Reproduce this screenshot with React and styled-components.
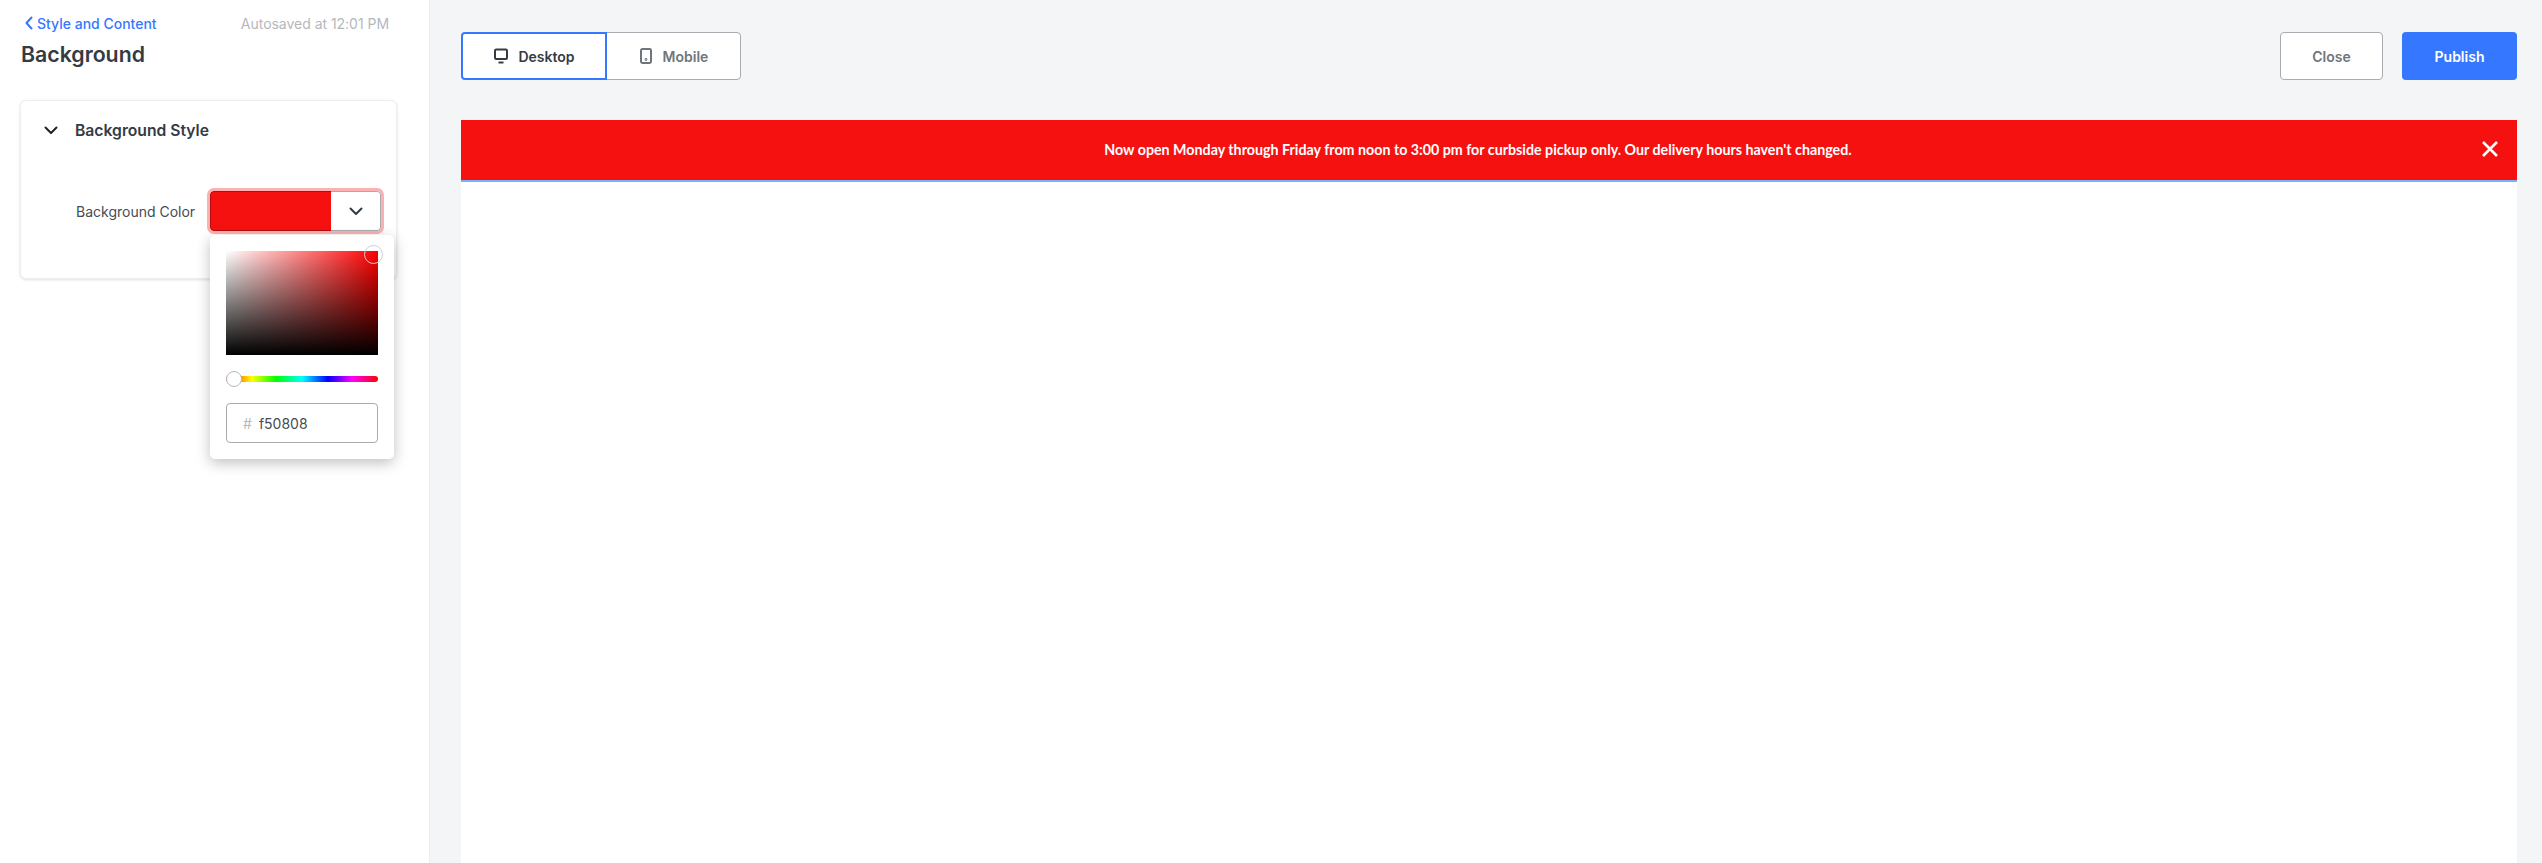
import React from "react";
import styled, { createGlobalStyle } from "styled-components";

const Global = createGlobalStyle`
  html, body { margin: 0; padding: 0; height: 100%; }
  body { font-family: Inter, "Liberation Sans", sans-serif; background: #f4f5f7; color: #343b43; }
  * { box-sizing: border-box; }
`;

const Page = styled.div`
  display: flex;
  width: 100%;
  height: 863px;
  overflow: hidden;
`;
const Sidebar = styled.aside`
  width: 430px;
  flex: none;
  background: #fff;
  border-right: 1px solid #eceef0;
  padding: 0 20px;
`;
const SideTop = styled.div`
  display: flex;
  justify-content: space-between;
  align-items: center;
  height: 24px;
  margin-top: 0;
  padding: 11px 20px 0 5px;
  box-sizing: content-box;
`;
const BackLink = styled.a`
  display: flex;
  align-items: center;
  gap: 4px;
  color: #3677ff;
  font-size: 14px;
  font-weight: 500;
`;
const Saved = styled.span`
  color: #b4b8bd;
  font-size: 14px;
  letter-spacing: -0.03px;
`;
const Title = styled.h1`
  margin: 4px 0 0 1px;
  font-size: 21.3px;
  line-height: 30px;
  font-weight: 600;
  color: #343b43;
`;
const Card = styled.section`
  position: relative;
  margin-top: 31px;
  width: 377px;
  height: 179px;
  background: #fff;
  border: 1px solid #eceef0;
  border-radius: 6px;
  box-shadow: 0 1px 3px rgba(0, 0, 0, 0.12);
`;
const CardHead = styled.div`
  display: flex;
  align-items: center;
  height: 58px;
  padding: 0 0 0 22px;
  gap: 16px;
  font-size: 15.7px;
  font-weight: 600;
`;
const FieldRow = styled.div`
  display: flex;
  align-items: center;
  margin-top: 32px;
  padding-left: 55px;
  font-size: 14px;
  color: #454c54;
`;
const FieldLabel = styled.label`
  width: 134px;
`;
const ColorSelect = styled.div`
  display: flex;
  width: 171px;
  height: 40px;
  border-radius: 4px;
  box-shadow: 0 0 0 3px #fbb1b1;
  overflow: hidden;
  background: #fff;
`;
const Swatch = styled.div`
  width: 121px;
  background: #f61111;
  border: 1px solid #b50d0d;
  border-right: none;
  border-radius: 4px 0 0 4px;
`;
const Caret = styled.div`
  flex: 1;
  display: flex;
  align-items: center;
  justify-content: center;
  border: 1px solid #a8abaf;
  border-left: none;
  border-radius: 0 4px 4px 0;
`;
const Popover = styled.div`
  position: absolute;
  left: 189px;
  top: 134px;
  width: 184px;
  height: 224px;
  padding: 16px;
  background: #fff;
  border-radius: 5px;
  box-shadow: 0 4px 14px rgba(0, 0, 0, 0.25);
`;
const Sat = styled.div`
  position: relative;
  width: 152px;
  height: 104px;
  background:
    linear-gradient(to bottom, transparent, #000),
    linear-gradient(to right, #fff, #f00);
`;
const SatThumb = styled.span`
  position: absolute;
  right: -5px;
  top: -6px;
  width: 19px;
  height: 19px;
  border-radius: 50%;
  border: 1px solid #d0d0d0;
`;
const Hue = styled.div`
  position: relative;
  width: 152px;
  height: 6px;
  margin-top: 21px;
  border-radius: 3px;
  background: linear-gradient(to right, #f00 0%, #ff0 17%, #0f0 33%, #0ff 50%, #00f 67%, #f0f 83%, #f00 100%);
`;
const HueThumb = styled.span`
  position: absolute;
  left: 0;
  top: -5px;
  width: 16px;
  height: 16px;
  border-radius: 50%;
  background: #fff;
  border: 1px solid #b8b8b8;
`;
const HexBox = styled.div`
  display: flex;
  align-items: center;
  width: 152px;
  height: 40px;
  margin-top: 21px;
  padding-left: 16px;
  gap: 7px;
  border: 1px solid #a8abaf;
  border-radius: 4px;
  font-size: 14px;
  color: #454c54;
`;
const Hash = styled.span`
  color: #b4b8bd;
`;
const Main = styled.main`
  flex: 1;
  min-width: 0;
  padding: 32px 25px 0 31px;
  display: flex;
  flex-direction: column;
`;
const Toolbar = styled.div`
  display: flex;
  align-items: center;
  justify-content: space-between;
  height: 48px;
`;
const Segments = styled.div`
  display: flex;
`;
const Segment = styled.button`
  display: flex;
  align-items: center;
  justify-content: center;
  gap: ${p => (p.$active ? "9px" : "10px")};
  height: 48px;
  width: ${p => (p.$active ? "146px" : "135px")};
  margin-left: ${p => (p.$active ? "0" : "-1px")};
  background: #fff;
  font: 600 14px Inter, sans-serif;
  color: ${p => (p.$active ? "#343b43" : "#6f757c")};
  border: ${p => (p.$active ? "2px solid #3677ff" : "1px solid #a8abaf")};
  border-radius: ${p => (p.$active ? "4px 0 0 4px" : "0 4px 4px 0")};
  position: relative;
  z-index: ${p => (p.$active ? 1 : 0)};
  padding: 0;
`;
const Actions = styled.div`
  display: flex;
  gap: 19px;
`;
const ActionButton = styled.button`
  height: 48px;
  width: ${p => (p.$primary ? "115px" : "103px")};
  font: 600 14px Inter, sans-serif;
  border-radius: 4px;
  padding: 0;
  color: ${p => (p.$primary ? "#fff" : "#6f757c")};
  background: ${p => (p.$primary ? "#3677ff" : "#fff")};
  border: ${p => (p.$primary ? "none" : "1px solid #a8abaf")};
`;
const Preview = styled.div`
  flex: 1;
  margin-top: 40px;
  background: #fff;
`;
const Banner = styled.div`
  position: relative;
  display: flex;
  align-items: center;
  justify-content: center;
  height: 62px;
  padding: 0 22px 2px 0;
  background: #f61111;
  border-bottom: 2px solid #78b1fb;
  color: #fff;
  font-family: Lato, sans-serif;
  font-size: 14.25px;
  font-weight: 700;
`;
const BannerClose = styled.span`
  position: absolute;
  right: 18px;
  top: 20px;
  display: flex;
`;

const Chevron = ({ size = 16, w = 2, color = "#1d2329" }) => (
  <svg width={size} height={size} viewBox="0 0 16 16" fill="none" stroke={color} strokeWidth={w} strokeLinecap="round" strokeLinejoin="round">
    <path d="M2.5 5.5 8 11l5.5-5.5" />
  </svg>
);

export default function App() {
  return (
    <>
      <Global />
      <Page>
        <Sidebar>
          <SideTop>
            <BackLink>
              <svg width="8" height="14" viewBox="0 0 8 14" fill="none" stroke="#3677ff" strokeWidth="2" strokeLinecap="round" strokeLinejoin="round">
                <path d="M6.5 1.5 1.5 7l5 5.5" />
              </svg>
              Style and Content
            </BackLink>
            <Saved>Autosaved at 12:01 PM</Saved>
          </SideTop>
          <Title>Background</Title>
          <Card>
            <CardHead>
              <Chevron />
              Background Style
            </CardHead>
            <FieldRow>
              <FieldLabel>Background Color</FieldLabel>
              <ColorSelect>
                <Swatch />
                <Caret><Chevron color="#343b43" /></Caret>
              </ColorSelect>
            </FieldRow>
            <Popover>
              <Sat><SatThumb /></Sat>
              <Hue><HueThumb /></Hue>
              <HexBox><Hash>#</Hash>f50808</HexBox>
            </Popover>
          </Card>
        </Sidebar>
        <Main>
          <Toolbar>
            <Segments>
              <Segment $active>
                <svg width="16" height="16" viewBox="0 0 16 16" fill="none" stroke="#343b43" strokeWidth="2">
                  <rect x="2" y="1.5" width="12" height="9.5" rx="1.2" />
                  <path d="M5.5 14.5h5" />
                </svg>
                Desktop
              </Segment>
              <Segment>
                <svg width="14" height="16" viewBox="0 0 14 16" fill="none" stroke="#6f757c" strokeWidth="2">
                  <rect x="2" y="1" width="10" height="14" rx="1.4" />
                  <circle cx="7" cy="11.5" r="0.4" fill="#6f757c" />
                </svg>
                Mobile
              </Segment>
            </Segments>
            <Actions>
              <ActionButton>Close</ActionButton>
              <ActionButton $primary>Publish</ActionButton>
            </Actions>
          </Toolbar>
          <Preview>
            <Banner>
              Now open Monday through Friday from noon to 3:00 pm for curbside pickup only. Our delivery hours haven't changed.
              <BannerClose>
                <svg width="18" height="18" viewBox="0 0 18 18" fill="none" stroke="#fff" strokeWidth="2.6">
                  <path d="M2 2l14 14M16 2 2 16" />
                </svg>
              </BannerClose>
            </Banner>
          </Preview>
        </Main>
      </Page>
    </>
  );
}
